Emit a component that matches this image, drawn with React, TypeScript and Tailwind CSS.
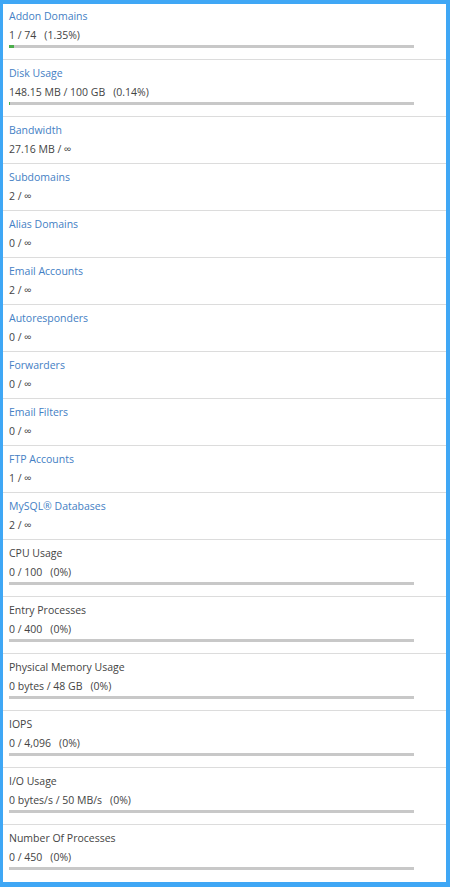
type Stat = {
  title: string
  value: string
  pct?: string
  bar?: number
  link?: boolean
}

const stats: Stat[] = [
  { title: 'Addon Domains', value: '1 / 74', pct: '(1.35%)', bar: 1.35, link: true },
  { title: 'Disk Usage', value: '148.15 MB / 100 GB', pct: '(0.14%)', bar: 0.14, link: true },
  { title: 'Bandwidth', value: '27.16 MB / ∞', link: true },
  { title: 'Subdomains', value: '2 / ∞', link: true },
  { title: 'Alias Domains', value: '0 / ∞', link: true },
  { title: 'Email Accounts', value: '2 / ∞', link: true },
  { title: 'Autoresponders', value: '0 / ∞', link: true },
  { title: 'Forwarders', value: '0 / ∞', link: true },
  { title: 'Email Filters', value: '0 / ∞', link: true },
  { title: 'FTP Accounts', value: '1 / ∞', link: true },
  { title: 'MySQL® Databases', value: '2 / ∞', link: true },
  { title: 'CPU Usage', value: '0 / 100', pct: '(0%)', bar: 0 },
  { title: 'Entry Processes', value: '0 / 400', pct: '(0%)', bar: 0 },
  { title: 'Physical Memory Usage', value: '0 bytes / 48 GB', pct: '(0%)', bar: 0 },
  { title: 'IOPS', value: '0 / 4,096', pct: '(0%)', bar: 0 },
  { title: 'I/O Usage', value: '0 bytes/s / 50 MB/s', pct: '(0%)', bar: 0 },
  { title: 'Number Of Processes', value: '0 / 450', pct: '(0%)', bar: 0 },
]

function StatRow({ stat, first, last }: { stat: Stat; first: boolean; last: boolean }) {
  const hasBar = stat.bar !== undefined
  return (
    <div
      className={`px-[6px] ${first ? 'pt-[3px]' : 'pt-[4px]'} ${hasBar ? 'pb-[11px]' : 'pb-[4px]'} ${
        last ? '' : 'border-b border-[#dcdcdc]'
      }`}
    >
      <div
        className={`text-[10.5px] leading-[19px] ${
          stat.link ? 'text-[#4480c4]' : 'text-[#444444]'
        }`}
      >
        {stat.title}
      </div>
      <div className="text-[10.5px] leading-[19px] text-[#444444]">
        {stat.value}
        {stat.pct && <span className="ml-[8px]">{stat.pct}</span>}
      </div>
      {hasBar && (
        <div className="h-[3px] w-[405px] bg-[#c8c8c8]">
          <div
            className="h-full bg-[#4cae4c]"
            style={{ width: `${stat.bar}%` }}
          />
        </div>
      )}
    </div>
  )
}

export default function App() {
  return (
    <div
      className="h-[887px] w-[450px] overflow-hidden border-t-[4px] border-l-[3px] border-r-[4px] border-b-[5px] border-[#3fa7f5] bg-white"
      style={{ fontFamily: '"Open Sans", "Liberation Sans", sans-serif' }}
    >
      {stats.map((s, i) => (
        <StatRow key={s.title} stat={s} first={i === 0} last={i === stats.length - 1} />
      ))}
    </div>
  )
}
